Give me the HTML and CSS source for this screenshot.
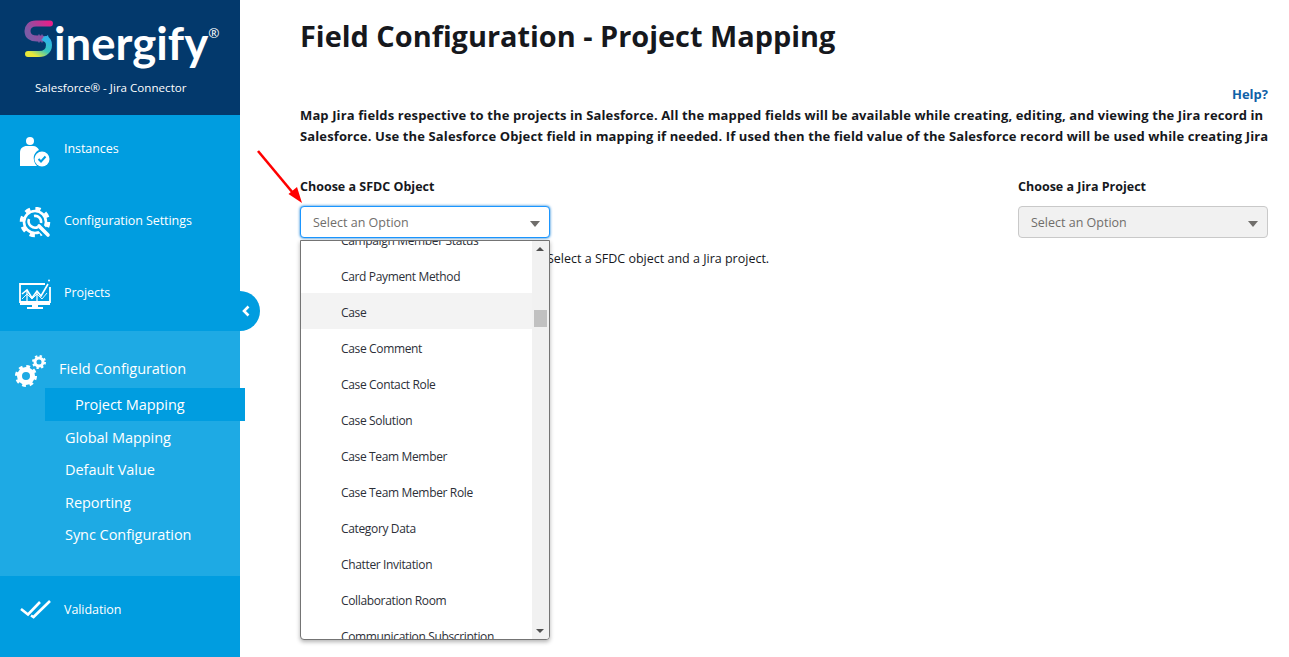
FILE: index.html
```html
<!DOCTYPE html>
<html lang="en">
<head>
<meta charset="utf-8">
<title>Field Configuration - Project Mapping</title>
<link rel="stylesheet" href="styles.css">
</head>
<body>
<div class="app">
  <aside class="sidebar">
    <div class="brand">
      <div class="logo">
        <svg class="logo-s" viewBox="0 0 32 42" width="32" height="42">
          <defs>
            <linearGradient id="sg1" x1="0" y1="0.5" x2="1" y2="0"><stop offset="0" stop-color="#7d5aa6"/><stop offset="1" stop-color="#e3218a"/></linearGradient>
            <linearGradient id="sg2" x1="1" y1="0" x2="0.2" y2="1"><stop offset="0" stop-color="#2fb4e6"/><stop offset="0.55" stop-color="#35c6bd"/><stop offset="1" stop-color="#e9e83a"/></linearGradient>
          </defs>
          <path d="M27 6.500H13C7 6.500 4.500 10 4.500 14C4.500 19 8 21.500 14 21.500H19" fill="none" stroke="url(#sg1)" stroke-width="6" stroke-linecap="round"/>
          <path d="M16 17.500V25.500M19 17.500V25.500" stroke="#7d5aa6" stroke-width="1.400"/>
          <path d="M22.500 22C25 23 26 25.500 26 28C26 33.500 22 37 16 37H5" fill="none" stroke="url(#sg2)" stroke-width="6" stroke-linecap="round"/>
          <path d="M18 23L25 18L27 26Z" fill="#2fb4e6"/>
        </svg>
        <span class="logo-word">inergify</span><span class="logo-reg">®</span>
      </div>
      <div class="tagline">Salesforce® - Jira Connector</div>
    </div>
    <nav class="nav">
      <a class="nav-item">
        <svg class="nav-icon" viewBox="0 0 32 32" width="32" height="32"><circle cx="11" cy="6" r="4" fill="#fff"/><path d="M1 31V18C1 13 4 11 8 11H14C17 11 19 13 20 15C16 17 14 21 15 25C15 27 17 30 18 31Z" fill="#fff"/><circle cx="23" cy="24" r="7.500" fill="#fff"/><path d="M19.500 24L22 26.500L26.500 21.500" fill="none" stroke="#009de0" stroke-width="2"/></svg>
        <span>Instances</span>
      </a>
      <a class="nav-item">
        <svg class="nav-icon" viewBox="0 0 32 32" width="32" height="32"><circle cx="16" cy="15" r="11" fill="none" stroke="#fff" stroke-width="2.600"/><circle cx="16" cy="15" r="13.500" fill="none" stroke="#fff" stroke-width="3.500" stroke-dasharray="5.300 5.300"/><path d="M20 19L32 31" stroke="#009de0" stroke-width="8"/><path d="M10 12A6.500 6.500 0 0 0 19 20" fill="none" stroke="#fff" stroke-width="2.600"/><path d="M15 9A6 6 0 0 1 22 16" fill="none" stroke="#fff" stroke-width="2.600"/><path d="M20 19L29 28" stroke="#fff" stroke-width="3.600" stroke-linecap="round"/></svg>
        <span>Configuration Settings</span>
      </a>
      <a class="nav-item nav-item-projects">
        <svg class="nav-icon" viewBox="0 0 32 32" width="32" height="32"><path d="M26 5H1V23H31V8" fill="none" stroke="#fff" stroke-width="1.800"/><rect x="1" y="22" width="30" height="4" fill="#fff"/><rect x="13" y="26" width="6" height="3" fill="#fff"/><rect x="8" y="28" width="16" height="2" fill="#fff"/><path d="M3 15L8 11L13 19L18 12L22 17L29 5" fill="none" stroke="#fff" stroke-width="1.600"/><path d="M3 20L8 15L13 20L18 15L23 20L28 14" fill="none" stroke="#fff" stroke-width=".9"/><rect x="7" y="12" width="2" height="10" fill="#fff" opacity=".6"/><rect x="17" y="13" width="2" height="9" fill="#fff" opacity=".6"/><circle cx="30" cy="1.500" r="1" fill="#fff"/></svg>
        <span>Projects</span>
      </a>
      <div class="group">
        <div class="group-head">
          <svg class="group-icon" viewBox="0 0 32 32" width="32" height="32"><circle cx="12" cy="21" r="6.500" fill="none" stroke="#fff" stroke-width="5"/><circle cx="12" cy="21" r="9.500" fill="none" stroke="#fff" stroke-width="3" stroke-dasharray="3.730 3.730"/><circle cx="25" cy="7" r="4" fill="none" stroke="#fff" stroke-width="3"/><circle cx="25" cy="7" r="6" fill="none" stroke="#fff" stroke-width="2" stroke-dasharray="2.350 2.350"/></svg>
          <span>Field Configuration</span>
        </div>
        <a class="sub sub-active">Project Mapping</a>
        <a class="sub">Global Mapping</a>
        <a class="sub">Default Value</a>
        <a class="sub">Reporting</a>
        <a class="sub">Sync Configuration</a>
      </div>
      <a class="nav-item nav-item-validation">
        <svg class="nav-icon" viewBox="0 0 32 20" width="32" height="20"><path d="M2 10L9 15.500L21 3" fill="none" stroke="#fff" stroke-width="2.600"/><path d="M12 16.500L14.500 18L31 2" fill="none" stroke="#fff" stroke-width="2.600"/></svg>
        <span>Validation</span>
      </a>
    </nav>
    <button class="collapse" aria-label="Collapse">
      <svg viewBox="0 0 10 12" width="10" height="12"><path d="M7.500 1.500L3 6L7.500 10.500" fill="none" stroke="#fff" stroke-width="2.600"/></svg>
    </button>
  </aside>
  <main class="content">
    <h1 class="title">Field Configuration - Project Mapping</h1>
    <div class="help-row"><a class="help">Help?</a></div>
    <p class="desc">Map Jira fields respective to the projects in Salesforce. All the mapped fields will be available while creating, editing, and viewing the Jira record in<br>Salesforce. Use the Salesforce Object field in mapping if needed. If used then the field value of the Salesforce record will be used while creating Jira</p>
    <div class="form-row">
      <div class="field">
        <label class="label">Choose a SFDC Object</label>
        <div class="select select-focus"><span>Select an Option</span><i class="caret"></i></div>
        <div class="dropdown">
          <ul class="list">
            <li class="opt opt-first">Campaign Member Status</li>
            <li class="opt">Card Payment Method</li>
            <li class="opt opt-hover">Case</li>
            <li class="opt">Case Comment</li>
            <li class="opt">Case Contact Role</li>
            <li class="opt">Case Solution</li>
            <li class="opt">Case Team Member</li>
            <li class="opt">Case Team Member Role</li>
            <li class="opt">Category Data</li>
            <li class="opt">Chatter Invitation</li>
            <li class="opt">Collaboration Room</li>
            <li class="opt">Communication Subscription</li>
          </ul>
          <div class="scrollbar">
            <i class="sb-up"></i>
            <i class="sb-thumb"></i>
            <i class="sb-down"></i>
          </div>
        </div>
        <p class="hint">Select a SFDC object and a Jira project.</p>
      </div>
      <div class="field field-jira">
        <label class="label">Choose a Jira Project</label>
        <div class="select select-disabled"><span>Select an Option</span><i class="caret"></i></div>
      </div>
    </div>
  </main>
  <svg class="arrow" viewBox="0 0 60 70" width="60" height="70"><path d="M2 2L37 44" stroke="#f00" stroke-width="2.600" fill="none"/><path d="M46 54L32.500 45L41 38Z" fill="#f00"/></svg>
</div>
</body>
</html>
```
FILE: styles.css
```css
* { box-sizing: border-box; }
html, body { margin: 0; padding: 0; height: 100%; }
body { font-family: "Open Sans", "Noto Sans", "Liberation Sans", sans-serif; background: #fff; color: #16181d; overflow: hidden; }
.app { position: relative; display: flex; width: 1289px; height: 657px; }

.sidebar { position: relative; flex: 0 0 240px; width: 240px; min-width: 0; display: flex; flex-direction: column; background: #009de0; color: #fff; }
.brand { height: 115px; background: #03396c; padding-top: 14px; }
.logo { display: flex; align-items: flex-start; height: 62px; padding-left: 23px; }
.logo-s { flex: none; margin-top: 3px; }
.logo-word { font-family: "Lato", "Open Sans", sans-serif; font-size: 45.500px; line-height: 52px; font-weight: 700; margin-left: -1px; margin-top: 3px; color: #fff; }
.logo-reg { font-size: 13.500px; line-height: 14px; margin-top: 12px; margin-left: 0; }
.tagline { padding-left: 35px; font-size: 11.600px; line-height: 16px; margin-top: 4px; }

.nav { display: flex; flex-direction: column; flex: 1; }
.nav-item { display: flex; align-items: center; gap: 13px; height: 72px; padding-left: 19px; font-size: 12.500px; letter-spacing: -0.07px; color: #fff; }
.nav-item > span { position: relative; top: -3px; }
.nav-icon { flex: none; }
.nav-item-projects { height: 72px; }
.nav-item-validation { height: 81px; padding-bottom: 15px; }
.nav-item-validation > span { top: 0; }

.group { height: 245px; background: #1eaae4; padding-top: 22px; }
.group-head { display: flex; align-items: center; gap: 13px; height: 35px; padding-left: 14px; font-size: 14.500px; letter-spacing: -0.05px; }
.group-head > span { position: relative; top: -2px; }
.sub { display: flex; align-items: center; height: 32.500px; padding-left: 65px; font-size: 14.500px; letter-spacing: -0.05px; color: #fff; }
.sub-active { position: relative; width: 200px; height: 33px; margin-left: 45px; padding-left: 30px; background: #009de0; }

.collapse { position: absolute; left: 240px; top: 291px; width: 20px; height: 40px; border: 0; padding: 0 0 0 1px; background: #009de0; border-radius: 0 20px 20px 0; display: flex; align-items: center; }

.content { flex: 1; padding: 16px 21px 0 60px; min-width: 0; }
.title { margin: 0; font-size: 28.900px; line-height: 40px; font-weight: 700; color: #16181d; }
.help-row { display: flex; justify-content: flex-end; margin-top: 28px; height: 20px; }
.help { font-size: 13px; line-height: 20px; font-weight: 700; color: #0f62a8; }
.desc { margin: 1px 0 0; font-size: 13px; line-height: 21px; font-weight: 700; white-space: nowrap; letter-spacing: 0.12px; }

.form-row { display: flex; justify-content: space-between; margin-top: 32px; }
.field { position: relative; width: 250px; }
.label { display: block; font-size: 12.500px; line-height: 16px; font-weight: 700; margin-bottom: 11px; }
.select { display: flex; align-items: center; justify-content: space-between; height: 32px; padding: 0 9px 0 12px; border-radius: 4px; background: #fff; font-size: 12.500px; color: #706e6b; }
.select-focus { border: 1px solid #1b96ff; box-shadow: 0 0 3px #0176d3; }
.select-disabled { border: 1px solid #c9c9c9; background: #f1f1f1; }
.caret { width: 0; height: 0; margin-top: 3px; border-left: 5.500px solid transparent; border-right: 5.500px solid transparent; border-top: 6px solid #706e6b; }

.dropdown { position: absolute; left: 0; top: 61px; z-index: 2; display: flex; width: 250px; height: 400px; background: #fff; border: 1px solid #747474; border-radius: 0 0 4px 4px; box-shadow: 0 2px 4px rgba(0,0,0,.3); overflow: hidden; }
.list { flex: 1; list-style: none; margin: 0; padding: 0; min-width: 0; }
.opt { height: 36px; padding-left: 40px; font-size: 12px; line-height: 40px; letter-spacing: -0.35px; color: #2c2f38; white-space: nowrap; }
.opt-first { height: 16px; line-height: 0; }
.opt-hover { background: #f3f3f3; }

.scrollbar { position: relative; flex: 0 0 17px; background: #f1f1f1; }
.sb-up, .sb-down { position: absolute; left: 4px; width: 0; height: 0; border-left: 4px solid transparent; border-right: 4px solid transparent; }
.sb-up { top: 6px; border-bottom: 4px solid #505050; }
.sb-down { bottom: 6px; border-top: 4px solid #505050; }
.sb-thumb { position: absolute; left: 2px; top: 69px; width: 13px; height: 17px; background: #c1c1c1; }

.hint { margin: 13px 0 0; padding-left: 247px; font-size: 12.500px; line-height: 16px; white-space: nowrap; letter-spacing: 0; color: #16181d; }

.arrow { position: absolute; left: 256px; top: 149px; z-index: 3; pointer-events: none; }
```
